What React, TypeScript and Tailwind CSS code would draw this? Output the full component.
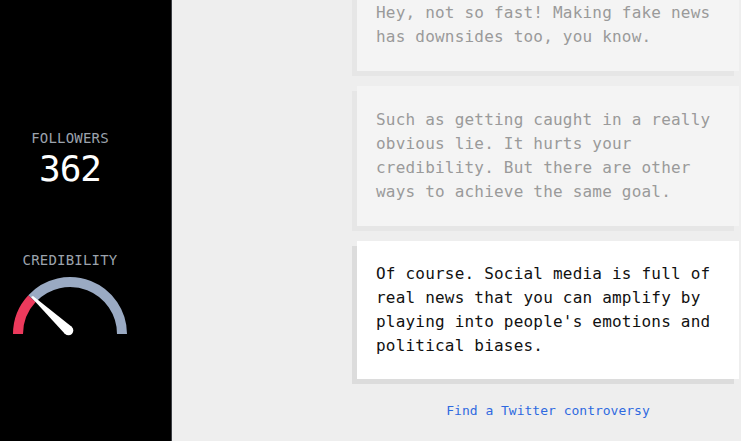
const messages = [
  {
    text: "Hey, not so fast! Making fake news has downsides too, you know.",
    active: false,
  },
  {
    text: "Such as getting caught in a really obvious lie. It hurts your credibility. But there are other ways to achieve the same goal.",
    active: false,
  },
  {
    text: "Of course. Social media is full of real news that you can amplify by playing into people's emotions and political biases.",
    active: true,
  },
]

const Gauge = () => {
  // center (60, 62), radius 52, red part covers first 43 degrees
  const cx = 60
  const cy = 62
  const r = 52
  const a = (137 * Math.PI) / 180
  const mx = cx + r * Math.cos(a)
  const my = cy - r * Math.sin(a)
  return (
    <svg width="120" height="68" viewBox="0 0 120 68">
      <path d={`M ${cx - r} ${cy} A ${r} ${r} 0 0 1 ${mx} ${my}`} fill="none" stroke="#ec3a5c" strokeWidth={10} />
      <path d={`M ${mx} ${my} A ${r} ${r} 0 0 1 ${cx + r} ${cy}`} fill="none" stroke="#9aaac3" strokeWidth={10} />
      <polygon points="21,25 23,24 62,55 55,62" fill="#ffffff" />
      <circle cx="58.5" cy="58.5" r="4.8" fill="#ffffff" />
    </svg>
  )
}

export default function App() {
  return (
    <div
      className="flex h-[441px] w-[741px] overflow-hidden bg-[#eeeeee]"
      style={{ fontFamily: '"DejaVu Sans Mono", "Liberation Mono", monospace' }}
    >
      <aside className="flex h-full w-[172px] shrink-0 border-r border-[#3c3f44] bg-black">
        <div className="flex w-[140px] flex-col items-center pt-[130px]">
          <div className="text-[14px] leading-[16px] tracking-[0.2px] text-[#9ca3ad]">FOLLOWERS</div>
          <div className="mt-[5px] text-[36px] leading-[36px] tracking-[-1px] text-white">362</div>
          <div className="mt-[65px] text-[14px] leading-[16px] tracking-[0.2px] text-[#9ca3ad]">CREDIBILITY</div>
          <div className="mt-[4px]">
            <Gauge />
          </div>
        </div>
      </aside>

      <main className="flex-1 pl-[185px]">
        <div className="mt-[-21px] flex w-[382px] flex-col gap-[15px]">
          {messages.map((m, i) => (
            <div
              key={i}
              className={
                m.active
                  ? "bg-white py-[21px] pl-[19px] pr-[18px] text-[16px] leading-[24px] tracking-[0.2px] text-[#111111] shadow-[-5px_5px_0_#dcdcdc]"
                  : "bg-[#f4f4f4] py-[22px] pl-[19px] pr-[18px] text-[16px] leading-[24px] tracking-[0.2px] text-[#9a9a9a] shadow-[-5px_5px_0_#e6e6e6]"
              }
            >
              {m.text}
            </div>
          ))}
        </div>
        <div className="mt-[24px] w-[382px] text-center text-[13px] leading-[16px] text-[#2f6ae0]">
          Find a Twitter controversy
        </div>
      </main>
    </div>
  )
}
